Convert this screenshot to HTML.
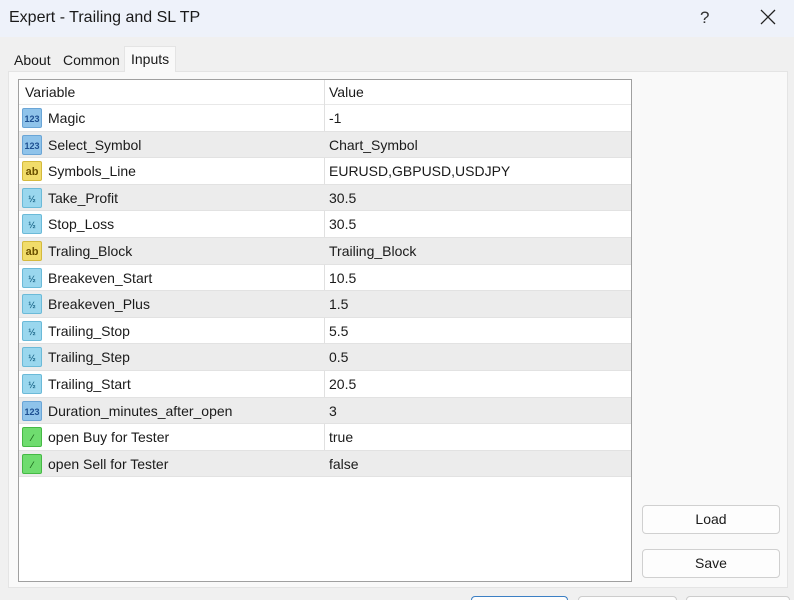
<!DOCTYPE html>
<html style="overflow:hidden"><head><style>
*{margin:0;padding:0;box-sizing:border-box}
html,body{width:794px;height:600px;overflow:hidden}
body{background:#f0f0f0;font-family:"Liberation Sans",sans-serif;font-size:14px;color:#1a1a1a;position:relative}
.title{position:absolute;left:0;top:0;width:794px;height:37px;background:#eef2fa}
.title span{position:absolute;left:9px;top:9px;font-size:16px}
.q{position:absolute;left:700px;top:8px;font-size:17px;color:#333}
.x{position:absolute;left:760px;top:9px}
.tab{position:absolute;top:48px;height:23px;font-size:14px;padding-top:4px}
.panel{position:absolute;left:8px;top:71px;width:780px;height:517px;background:#f9f9f9;border:1px solid #e4e4e4}
.tbl{position:absolute;left:18px;top:79px;width:614px;height:503px;background:#fff;border:1px solid #a0a0a0}
.row{position:absolute;left:0;width:612px;height:26.6px;border-bottom:1px solid #e2e2e2}
.row.g{background:#ececec}
.row span{position:absolute;top:5px}
.n{left:29px}.v{left:310px}
.div{position:absolute;left:305px;top:0;width:1px;height:396px;background:#e0e0e0}
.ic{position:absolute;left:3px;top:3px;width:20px;height:20px;border-radius:2px;font-size:9px;font-weight:bold;text-align:center;line-height:20px}
.i1{background:#8fc3ea;color:#1d4f91;border:1px solid #6aa5d6}
.ia{background:#f1dc6a;color:#6b5100;border:1px solid #d4ba3c;font-size:11px}
.ih{background:#9ad7ee;color:#1f6a8c;border:1px solid #6bbad8}
.ib{background:#6fdc6f;color:#1d6b1d;border:1px solid #45b945}
.btn{position:absolute;left:642px;width:138px;height:29px;background:#fdfdfd;border:1px solid #d0d0d0;border-radius:4px;text-align:center;line-height:27px}
.bb{position:absolute;top:596px;height:4px;background:#fdfdfd;border:1px solid #ccc;border-bottom:none;border-radius:4px 4px 0 0}
</style></head><body>
<div class="title"><span>Expert - Trailing and SL TP</span><div class="q">?</div>
<svg class="x" width="16" height="16" viewBox="0 0 16 16"><path d="M1 1L15 15M15 1L1 15" stroke="#222" stroke-width="1.3"/></svg></div>
<div class="tab" style="left:14px">About</div>
<div class="tab" style="left:63px">Common</div>
<div class="panel"></div>
<div class="tab" style="left:124px;top:46px;height:26px;width:52px;background:#f9f9f9;padding-left:6px;border:1px solid #e4e4e4;border-bottom:none">Inputs</div>
<div class="tbl">
<div class="row" style="top:0;height:25px;border-bottom:1px solid #e8e8e8"><span style="left:6px;top:4px">Variable</span><span class="v" style="top:4px">Value</span></div>
<div class="div"></div>
<div class="row" style="top:25px"><div class="ic i1">123</div><span class="n">Magic</span><span class="v">-1</span></div>
<div class="row g" style="top:51.6px"><div class="ic i1">123</div><span class="n">Select_Symbol</span><span class="v">Chart_Symbol</span></div>
<div class="row" style="top:78.2px"><div class="ic ia">ab</div><span class="n">Symbols_Line</span><span class="v">EURUSD,GBPUSD,USDJPY</span></div>
<div class="row g" style="top:104.8px"><div class="ic ih">½</div><span class="n">Take_Profit</span><span class="v">30.5</span></div>
<div class="row" style="top:131.4px"><div class="ic ih">½</div><span class="n">Stop_Loss</span><span class="v">30.5</span></div>
<div class="row g" style="top:158px"><div class="ic ia">ab</div><span class="n">Traling_Block</span><span class="v">Trailing_Block</span></div>
<div class="row" style="top:184.6px"><div class="ic ih">½</div><span class="n">Breakeven_Start</span><span class="v">10.5</span></div>
<div class="row g" style="top:211.2px"><div class="ic ih">½</div><span class="n">Breakeven_Plus</span><span class="v">1.5</span></div>
<div class="row" style="top:237.8px"><div class="ic ih">½</div><span class="n">Trailing_Stop</span><span class="v">5.5</span></div>
<div class="row g" style="top:264.4px"><div class="ic ih">½</div><span class="n">Trailing_Step</span><span class="v">0.5</span></div>
<div class="row" style="top:291px"><div class="ic ih">½</div><span class="n">Trailing_Start</span><span class="v">20.5</span></div>
<div class="row g" style="top:317.6px"><div class="ic i1">123</div><span class="n">Duration_minutes_after_open</span><span class="v">3</span></div>
<div class="row" style="top:344.2px"><div class="ic ib">⁄</div><span class="n">open Buy for Tester</span><span class="v">true</span></div>
<div class="row g" style="top:370.8px"><div class="ic ib">⁄</div><span class="n">open Sell for Tester</span><span class="v">false</span></div>
</div>
<div class="btn" style="top:505px">Load</div>
<div class="btn" style="top:549px">Save</div>
<div class="bb" style="left:471px;width:97px;border-color:#3b7fc4"></div>
<div class="bb" style="left:578px;width:99px"></div>
<div class="bb" style="left:686px;width:104px"></div>
</body></html>
